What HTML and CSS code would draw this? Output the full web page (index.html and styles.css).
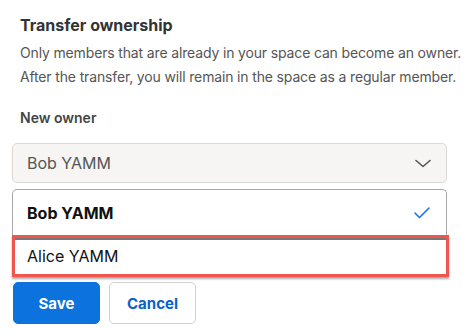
FILE: index.html
```html
<!DOCTYPE html>
<html>
<head>
<meta charset="utf-8">
<link rel="stylesheet" href="styles.css">
</head>
<body>
<div class="page">
  <h2 class="title">Transfer ownership</h2>
  <p class="desc"><span class="line">Only members that are already in your space can become an owner.</span><span class="line">After the transfer, you will remain in the space as a regular member.</span></p>
  <div class="label">New owner</div>
  <div class="select">
    <span>Bob YAMM</span>
    <svg class="chev" width="16" height="9" viewBox="0 0 16 9"><path d="M1 1.5 L8 7.5 L15 1.5" fill="none" stroke="#555" stroke-width="1.6" stroke-linecap="round" stroke-linejoin="round"/></svg>
  </div>
  <div class="menu">
    <div class="item selected">
      <span>Bob YAMM</span>
      <svg width="16" height="12" viewBox="0 0 16 12"><path d="M1 6 L5.5 10.5 L15 1" fill="none" stroke="#1a73e8" stroke-width="1.6" stroke-linecap="round" stroke-linejoin="round"/></svg>
    </div>
    <div class="item hl">
      <span>Alice YAMM</span>
      <div class="mark"></div>
    </div>
  </div>
  <div class="buttons">
    <button class="btn save">Save</button>
    <button class="btn cancel">Cancel</button>
  </div>
</div>
</body>
</html>
```
FILE: styles.css
```css
html, body {
  margin: 0;
  background: #fff;
}
body {
  font-family: Inter, "Noto Sans", sans-serif;
  width: 465px;
  height: 333px;
  overflow: hidden;
}
.page {
  padding: 15px 18px 0 12px;
}
.title {
  margin: 0;
  padding-left: 8px;
  font-size: 16px;
  line-height: 20px;
  font-weight: 700;
  color: #333;
}
.desc {
  margin: 6px 0 0;
  padding-left: 8px;
  font-size: 14px;
  line-height: 23.5px;
  color: #555;
  white-space: nowrap;
}
.line {
  display: block;
  letter-spacing: -0.15px;
}
.label {
  margin-top: 20px;
  padding-left: 8px;
  font-size: 14px;
  line-height: 20px;
  font-weight: 600;
  color: #444;
}
.select {
  margin-top: 15px;
  height: 40px;
  box-sizing: border-box;
  border: 1px solid #dcd9d5;
  border-radius: 5px;
  background: #f6f5f3;
  display: flex;
  align-items: center;
  justify-content: space-between;
  padding: 0 15px 0 14px;
  font-size: 16px;
  color: #555;
}
.menu {
  margin-top: 6px;
  border: 1px solid #a8a8a8;
  border-bottom: none;
  border-radius: 5px 5px 0 0;
  background: #fff;
}
.item {
  display: flex;
  align-items: center;
  justify-content: space-between;
  padding: 0 16px 0 14px;
  font-size: 16px;
  color: #111;
}
.item.selected {
  height: 45px;
  font-weight: 700;
}
.item.hl {
  position: relative;
  height: 42px;
}
.mark {
  position: absolute;
  left: -1px;
  right: -3px;
  top: 0;
  bottom: 0;
  border: 3px solid #f0564e;
  box-shadow: inset 0 2px 0 #777, 0 2px 2px rgba(0,0,0,0.35);
}
.buttons {
  margin-top: 5px;
  display: flex;
  gap: 9px;
  padding-left: 1px;
}
.btn {
  width: 87px;
  height: 42px;
  border-radius: 5px;
  font-family: Inter, "Noto Sans", sans-serif;
  font-size: 15px;
  font-weight: 700;
  cursor: pointer;
}
.save {
  background: #0b72de;
  border: 1px solid #0b72de;
  color: #fff;
}
.cancel {
  background: #fff;
  border: 1px solid #d0d0d0;
  color: #0b63c5;
}
```
